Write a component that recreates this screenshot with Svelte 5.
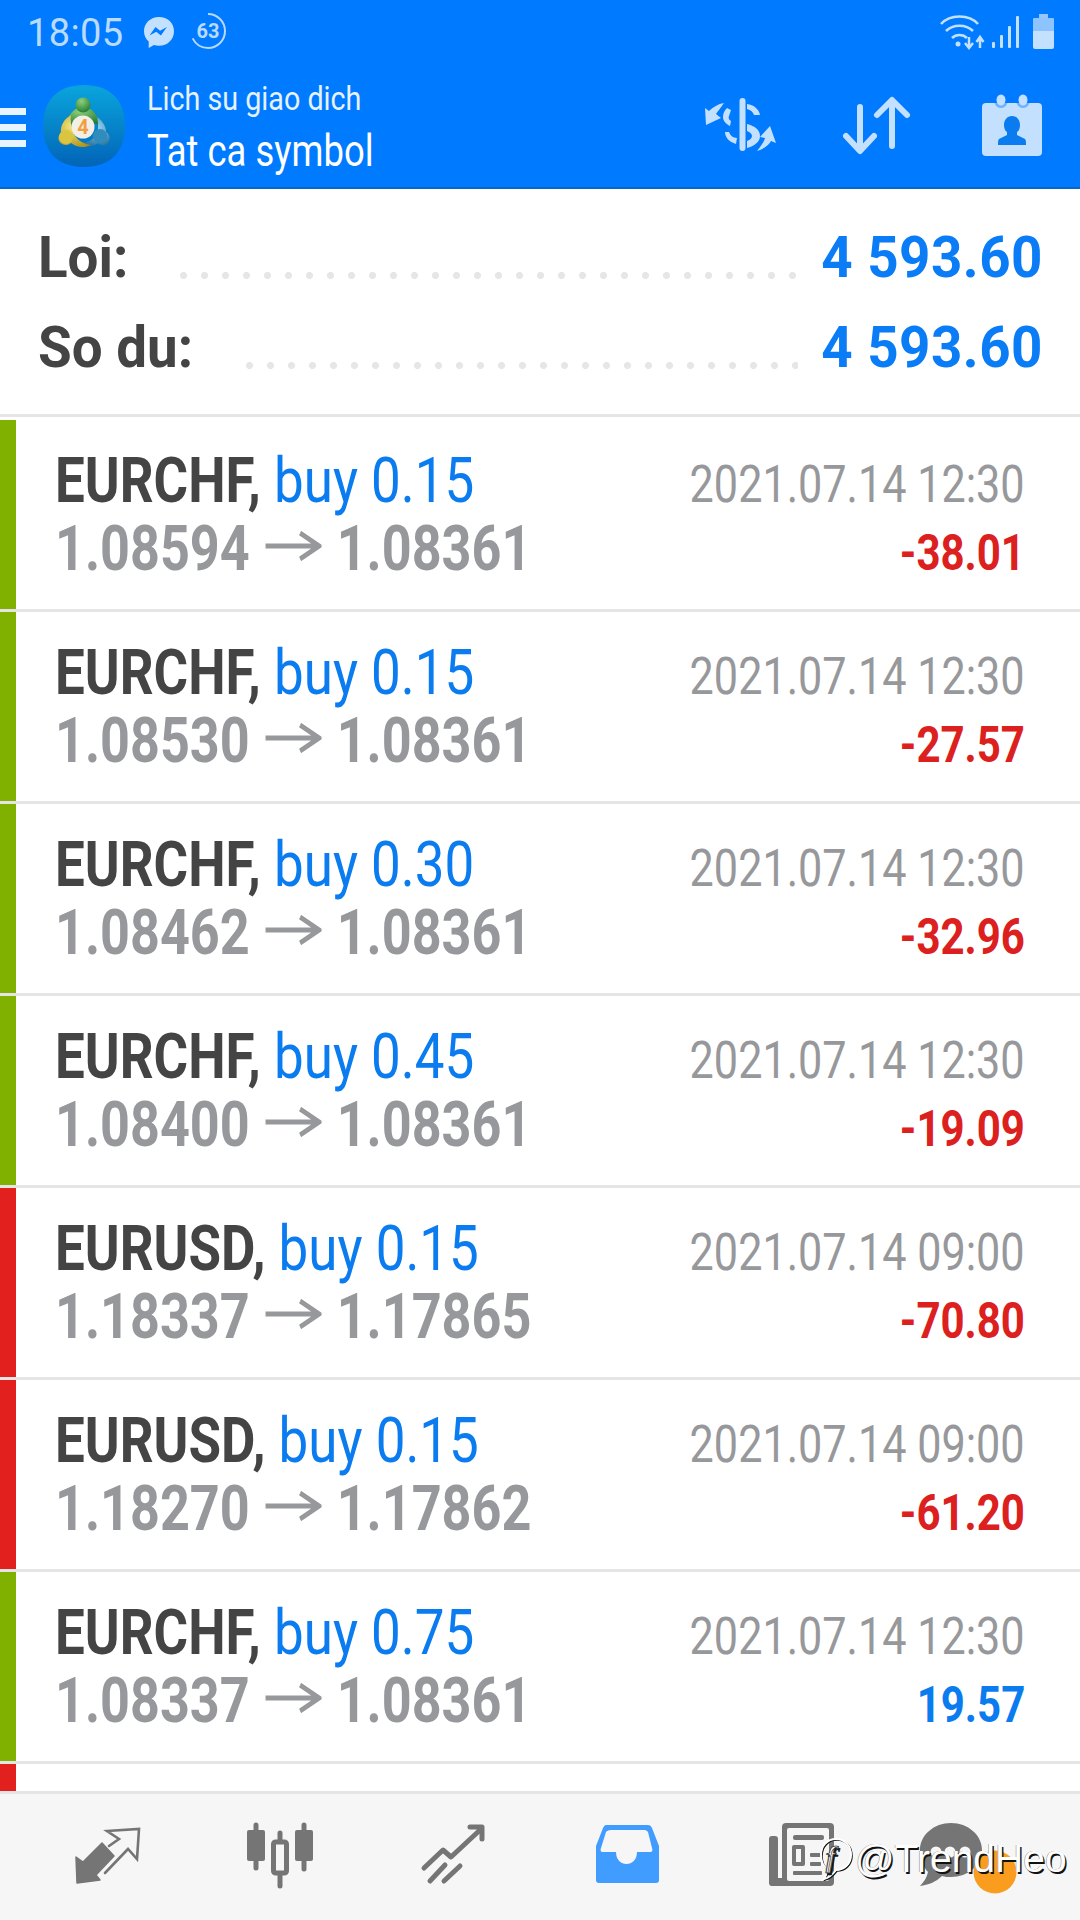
<script>
  const rows = [
    { sym: 'EURCHF', vol: '0.15', open: '1.08594', close: '1.08361', date: '2021.07.14 12:30', pl: '-38.01', bar: 'green', up: false },
    { sym: 'EURCHF', vol: '0.15', open: '1.08530', close: '1.08361', date: '2021.07.14 12:30', pl: '-27.57', bar: 'green', up: false },
    { sym: 'EURCHF', vol: '0.30', open: '1.08462', close: '1.08361', date: '2021.07.14 12:30', pl: '-32.96', bar: 'green', up: false },
    { sym: 'EURCHF', vol: '0.45', open: '1.08400', close: '1.08361', date: '2021.07.14 12:30', pl: '-19.09', bar: 'green', up: false },
    { sym: 'EURUSD', vol: '0.15', open: '1.18337', close: '1.17865', date: '2021.07.14 09:00', pl: '-70.80', bar: 'red', up: false },
    { sym: 'EURUSD', vol: '0.15', open: '1.18270', close: '1.17862', date: '2021.07.14 09:00', pl: '-61.20', bar: 'red', up: false },
    { sym: 'EURCHF', vol: '0.75', open: '1.08337', close: '1.08361', date: '2021.07.14 12:30', pl: '19.57', bar: 'green', up: true }
  ];
</script>

<div class="screen">
  <header class="head">
    <div class="status">
      <span class="clock">18:05</span>
      <svg class="msg" viewBox="0 0 32 32" width="32" height="32">
        <path fill="#c4e0ff" d="M16 1C7.5 1 1 7.2 1 15.2c0 4.2 1.8 7.8 4.7 10.3V32l5.2-2.9c1.6.5 3.3.7 5.1.7 8.5 0 15-6.4 15-14.6S24.500 1 16 1z"/>
        <path fill="#007aff" d="M6.500 19.500l6-8.600 4.600 3.800 6.800-3.800-6 8.600-4.600-3.800z"/>
      </svg>
      <span class="ring">
        <svg viewBox="0 0 38 38" width="38" height="38">
          <circle cx="19" cy="19" r="17" fill="none" stroke="#b8d9ff" stroke-width="2" stroke-dasharray="72 35" transform="rotate(-90 19 19)"/>
          <text x="19" y="26" text-anchor="middle" class="ringtext">63</text>
        </svg>
      </span>
      <svg class="sys" viewBox="0 0 120 40" width="120" height="40">
        <g fill="none" stroke="#c4e0ff" stroke-width="2.600">
          <path d="M3 11C12 1 31 1 40 11"/>
          <path d="M8 18c7-7 20-7 27 0"/>
          <path d="M14 25c4-4 11-4 15 0"/>
        </g>
        <circle cx="20" cy="31" r="2.500" fill="#c4e0ff"/>
        <path d="M31 24v9M27 30l4 5 4-5M42 35v-9M38.500 29l3.500-5 3.500 5" fill="none" stroke="#c4e0ff" stroke-width="2.500"/>
        <g fill="#c4e0ff">
          <rect x="54" y="29" width="3" height="6" rx="1"/>
          <rect x="62" y="22" width="3" height="13" rx="1"/>
          <rect x="70" y="13" width="3" height="22" rx="1"/>
          <rect x="78" y="3" width="3" height="32" rx="1"/>
          <path d="M101 1h9v4h-9z" opacity=".75"/>
          <path d="M96 5h19a1 1 0 0 1 1 1v12H95V6a1 1 0 0 1 1-1z" opacity=".72"/>
          <path d="M95 18h21v16a2 2 0 0 1-2 2H97a2 2 0 0 1-2-2z"/>
        </g>
      </svg>
    </div>
    <div class="bar">
      <div class="burger"><i></i><i></i><i></i></div>
      <svg class="logo" viewBox="0 0 82 82" width="82" height="82">
        <defs>
          <linearGradient id="lg" x1="0" y1="0" x2="0" y2="1">
            <stop offset="0" stop-color="#0aa5dc"/>
            <stop offset="1" stop-color="#0264b8"/>
          </linearGradient>
          <radialGradient id="gg" cx=".4" cy=".25" r=".8"><stop offset="0" stop-color="#8fd07c"/><stop offset="1" stop-color="#1f7a33"/></radialGradient>
          <radialGradient id="yy" cx=".4" cy=".35" r=".8"><stop offset="0" stop-color="#f4e57a"/><stop offset="1" stop-color="#a88c14"/></radialGradient>
          <radialGradient id="bb" cx=".6" cy=".35" r=".8"><stop offset="0" stop-color="#9ad8f0"/><stop offset="1" stop-color="#0f5f92"/></radialGradient>
        </defs>
        <path fill="url(#lg)" d="M41 0C66 0 82 14 82 41S66 82 41 82 0 68 0 41 16 0 41 0z"/>
        <path fill="url(#gg)" d="M40 22c9 0 15 8 17 18l-17-5-17 5c2-10 8-18 17-18z"/>
        <circle cx="40" cy="20" r="7.500" fill="url(#gg)"/>
        <path fill="url(#bb)" d="M54 32c6 4 9 10 9 15 4 2 5 8 2 11-3 3-8 3-10 0-6 5-15 4-21 0 8 1 17-2 20-10 2-5 1-11 0-16z"/>
        <circle cx="57" cy="51" r="7" fill="#2f8cbd"/>
        <path fill="url(#yy)" d="M28 30c-7 4-11 11-10 18-4 3-3 9 1 11 3 2 7 1 9-1 6 5 14 5 20 2-8-1-16-6-18-14-2-6-3-11-2-16z"/>
        <circle cx="23" cy="52" r="7" fill="#d9c53f"/>
        <circle cx="40" cy="42" r="11.500" fill="#f3efe6"/>
        <text x="40" y="49" text-anchor="middle" class="four">4</text>
      </svg>
      <div class="titles">
        <div class="t1"><span>Lich su giao dich</span></div>
        <div class="t2"><span>Tat ca symbol</span></div>
      </div>
      <svg class="acts" viewBox="0 0 360 70" width="360" height="70">
        <g transform="translate(-700 -92)" fill="#c4e0ff" stroke="none">
          <rect x="739.500" y="98" width="6" height="53" rx="3"/>
          <path d="M747 104c7 1 12 5 13 11h-6c-1-3-3-5-7-6zM747 124c8 2 13 6 13 12s-6 10-13 12zM727 108c-3 3-4 6-4 9 0 4 3 7 7 9l1-5c-2-1-3-3-2-5l2-6zM725 132c0 5 4 10 11 12l1-6c-4 0-7-3-8-6z"/>
          <path d="M724 103c-4 6-6 8-8 11l5 4-15 7-1-17 4 3c4-4 9-7 15-8z"/>
          <path d="M757 151c4-5 7-9 8-13l-5-1 10-11 6 17-5-2c-2 4-7 8-14 10z"/>
        </g>
        <path transform="translate(-700 -92)" d="M747 131c3 1 5 3 5 5s-2 4-5 5z" fill="#007aff"/>
        <g transform="translate(-700 -92)" fill="none" stroke="#c4e0ff" stroke-width="6" stroke-linecap="round" stroke-linejoin="round">
          <path d="M860 107v43M846 136l14 15 14-15"/>
          <path d="M892 146V101M877 115l15-15 15 15"/>
        </g>
        <g transform="translate(-700 -92)">
          <rect x="982" y="103" width="60" height="53" rx="4" fill="#c4e0ff"/>
          <ellipse cx="1001" cy="100" rx="7" ry="8" fill="#007aff" opacity=".45"/>
          <ellipse cx="1023" cy="100" rx="7" ry="8" fill="#007aff" opacity=".45"/>
          <ellipse cx="1001" cy="100" rx="4.500" ry="5.500" fill="#c4e0ff"/>
          <ellipse cx="1023" cy="100" rx="4.500" ry="5.500" fill="#c4e0ff"/>
          <path fill="#0a7cf0" d="M1012 116c5 0 8 4 8 9 0 3-1 6-3 7v3l8 4c1 1 1 3 1 6h-28c0-3 0-5 1-6l8-4v-3c-2-1-3-4-3-7 0-5 3-9 8-9z"/>
        </g>
      </svg>
    </div>
  </header>

  <section class="summary">
    <div class="sumrow">
      <div class="lbl lbl-a"><span>Loi:</span></div>
      <div class="dots"></div>
      <div class="val"><span>4 593.60</span></div>
    </div>
    <div class="sumrow">
      <div class="lbl lbl-b"><span>So du:</span></div>
      <div class="dots dots-b"></div>
      <div class="val"><span>4 593.60</span></div>
    </div>
  </section>

  <div class="list">
    {#each rows as r}
      <article class="row">
        <div class="side" class:green={r.bar === 'green'} class:red={r.bar === 'red'}></div>
        <div class="cells">
          <div class="title"><span><b>{r.sym},</b> <em>buy {r.vol}</em></span></div>
          <div class="date"><span>{r.date}</span></div>
          <div class="price">
            <span>{r.open}<svg class="arrow" viewBox="0 0 68 30" width="68" height="30"><path d="M0 15H65M42 2l23 13-23 13" fill="none" stroke="#97989b" stroke-width="5"/></svg>{r.close}</span>
          </div>
          <div class="pl" class:up={r.up}><span>{r.pl}</span></div>
        </div>
      </article>
    {/each}
    <article class="row"><div class="side red"></div></article>
  </div>

  <nav class="nav">
    <svg class="navart" viewBox="0 0 1080 126" width="1080" height="126">
      <g fill="#757575" stroke="none">
        <path d="M76 63l7 5 19-19 12 13-18 19 4 5-23 3z" stroke="#757575" stroke-width="1.500" stroke-linejoin="round"/>
      </g>
      <path d="M109 52l10-7-12-8 32-2-2 30-9-10-23 24" fill="none" stroke="#757575" stroke-width="2.600" stroke-linecap="round"/>

      <g fill="#757575">
        <rect x="247" y="36" width="18" height="31" rx="2"/>
        <rect x="295" y="36" width="18" height="31" rx="2"/>
      </g>
      <g stroke="#757575" stroke-width="5" stroke-linecap="round" fill="none">
        <path d="M256 31v43M304 31v44M280 39v7M280 82v10"/>
        <rect x="273.500" y="48" width="13" height="31" rx="2"/>
      </g>

      <g stroke="#757575" stroke-width="5" stroke-linecap="round" stroke-linejoin="round" fill="none">
        <path d="M424 74l19-18 8 7 29-27M470 33h12v12M430 87l15-16M444 87l16-15"/>
      </g>

      <path fill="#419cff" d="M606 31h42c2 0 3 1 4 3l7 18v34c0 2-1 3-3 3h-57c-2 0-3-1-3-3V52l7-18c1-2 2-3 3-3z"/>
      <path fill="#f6f6f6" d="M611 36h34c1 0 2 1 3 2l4 16c1 3 0 4-2 4h-13c0 8-5 12-10.500 12S616 66 616 58h-13c-2 0-3-1-2-4l5-16c1-1 2-2 5-2z"/>

      <g fill="#757575">
        <rect x="769" y="42" width="9" height="50" rx="3"/>
        <rect x="771" y="84" width="20" height="8"/>
        <rect x="782" y="29" width="52" height="63" rx="4"/>
      </g>
      <rect x="787" y="34" width="42" height="53" rx="2" fill="#f6f6f6"/>
      <g fill="#757575">
        <rect x="793" y="41" width="31" height="5" rx="2"/>
        <rect x="792" y="51" width="13" height="21" rx="2"/>
        <rect x="810" y="59" width="11" height="4" rx="1"/>
        <rect x="810" y="68" width="11" height="4" rx="1"/>
        <rect x="793" y="77" width="29" height="4" rx="1"/>
      </g>
      <rect x="796" y="55" width="5" height="13" fill="#f6f6f6"/>

      <path fill="#757575" d="M951 29c17 0 31 12 31 27s-14 27-31 27c-3 0-6 0-9-1-6 6-14 9-22 10 4-4 7-9 8-14-5-5-8-14-8-22 0-15 14-27 31-27z"/>
      <g fill="#f6f6f6"><circle cx="936" cy="58" r="5.500"/><circle cx="950" cy="58" r="5.500"/><circle cx="965" cy="58" r="5.500"/></g>
      <circle cx="995" cy="78" r="21.500" fill="#fa9d1e"/>
    </svg>
    <div class="mark">
      <svg viewBox="0 0 34 44" width="34" height="44">
        <g fill="none" stroke-linecap="round">
          <path d="M17 2C26 2 32 9 32 18s-7 15-15 15c-3 4-7 8-12 9 2-3 3-6 3-10-4-3-6-8-6-14C2 9 8 2 17 2z" stroke="#111" stroke-width="1.600" transform="translate(1 1)"/>
          <path d="M17 2C26 2 32 9 32 18s-7 15-15 15c-3 4-7 8-12 9 2-3 3-6 3-10-4-3-6-8-6-14C2 9 8 2 17 2z" stroke="#fff" stroke-width="2"/>
        </g>
        <text x="7" y="30" class="markf">f</text>
      </svg>
      <span>@TrendHeo</span>
    </div>
  </nav>
</div>

<style>
  :global(body) { margin: 0; background: #fff; }
  .screen {
    width: 1080px;
    height: 1920px;
    display: flex;
    flex-direction: column;
    overflow: hidden;
    position: relative;
    background: #fff;
    font-family: Roboto, "Liberation Sans", sans-serif;
  }
  .head {
    height: 187px;
    flex: none;
    background: #007aff;
    border-bottom: 2px solid #0a68c4;
    display: flex;
    flex-direction: column;
  }
  .status {
    height: 62px;
    display: flex;
    align-items: center;
    padding-left: 27px;
    position: relative;
  }
  .clock { font-size: 38px; color: #b9dbff; letter-spacing: .4px; width: 116px; padding-top: 4px; }
  .msg { margin-top: 2px; }
  .ring { margin-left: 14px; display: block; height: 38px; }
  .ringtext { font: 700 20px Roboto, sans-serif; fill: #b9dbff; }
  .sys { margin-left: auto; margin-right: 22px; margin-top: 4px; }
  .bar { height: 125px; display: flex; align-items: flex-start; position: relative; }
  .burger { width: 26px; margin-top: 46px; display: flex; flex-direction: column; gap: 9px; }
  .burger i { display: block; height: 7px; background: #e9f4ff; }
  .logo { margin: 23px 0 0 17px; flex: none; }
  .titles { margin-left: 22px; color: #e6f2ff; }
  .titles span { display: inline-block; transform-origin: left center; white-space: nowrap; }
  .t1 { font-size: 33px; line-height: 40px; margin-top: 17px; }
  .t1 span { transform: scaleX(.87); }
  .t2 { font-size: 45px; line-height: 52px; margin-top: 6px; color: #fff; }
  .t2 span { transform: scaleX(.81); }
  .acts { margin-left: auto; margin-top: 30px; margin-right: 20px; flex: none; }

  .summary {
    height: 228px;
    flex: none;
    border-bottom: 3px solid #e5e5e5;
    padding: 24px 0 0 38px;
    box-sizing: border-box;
    margin-bottom: 3px;
  }
  .sumrow { height: 90px; display: flex; align-items: baseline; font-weight: 700; font-size: 57px; line-height: 90px; }
  .lbl { color: #444; flex: none; }
  .lbl span, .val span { display: inline-block; white-space: nowrap; }
  .lbl span { transform: scaleX(.96); transform-origin: left center; }
  .lbl-a { width: 142px; }
  .lbl-b { width: 208px; }
  .dots {
    flex: 1;
    height: 7px;
    background: radial-gradient(circle at 3.500px 3.500px, #e6e6e6 3.300px, transparent 3.800px) 0 0 / 21px 7px repeat-x;
    align-self: flex-end;
    margin-bottom: 24px;
  }
  .val { width: 245px; text-align: right; color: #0a7cf6; flex: none; margin-right: 37px; }
  .val span { transform: scaleX(.96); transform-origin: right center; letter-spacing: .5px; }

  .list { flex: 1; overflow: hidden; min-height: 0; }
  .row { height: 189px; border-bottom: 3px solid #e5e5e5; display: flex; }
  .side { width: 16px; flex: none; }
  .green { background: #80b000; }
  .red { background: #e2211f; }
  .cells {
    flex: 1;
    min-width: 0;
    display: grid;
    grid-template-columns: minmax(0, 1fr) auto;
    grid-auto-rows: 68px;
    align-items: baseline;
    padding: 27px 55px 0 39px;
  }
  .title, .price { min-width: 0; }
  .title span, .date span, .price span, .pl span { display: inline-block; white-space: nowrap; }
  .title { font-size: 63px; line-height: 68px; }
  .title span { transform: scaleX(.84); transform-origin: left center; }
  .title b { font-weight: 700; color: #444; }
  .title em { font-style: normal; color: #0a7cf0; }
  .date { font-size: 52px; line-height: 68px; color: #97989b; text-align: right; }
  .date span { transform: scaleX(.83); transform-origin: right center; }
  .price { font-size: 63px; line-height: 68px; font-weight: 700; color: #97989b; }
  .price span { transform: scaleX(.828); transform-origin: left center; }
  .arrow { vertical-align: 9px; margin: 0 18px 0 19px; }
  .pl { font-size: 50px; line-height: 68px; font-weight: 700; color: #dc2020; text-align: right; }
  .pl span { transform: scaleX(.84); transform-origin: right center; }
  .pl.up { color: #0a7cf0; }

  .nav {
    height: 126px;
    flex: none;
    border-top: 3px solid #e5e5e5;
    background: #f6f6f6;
    position: relative;
  }
  .navart { display: block; }
  .mark {
    position: absolute;
    left: 819px;
    top: 43px;
    display: flex;
    align-items: center;
    gap: 2px;
    font-family: "Liberation Sans", sans-serif;
    font-size: 39px;
    color: #fff;
    text-shadow: 1.500px 1.500px 0 #111, -.5px -.5px 0 #888;
  }
  .markf { font: italic 700 30px "Liberation Serif", serif; fill: #fff; stroke: #111; stroke-width: .6px; }
  .four { font: 700 20px Roboto, sans-serif; fill: #f0a040; }
</style>
